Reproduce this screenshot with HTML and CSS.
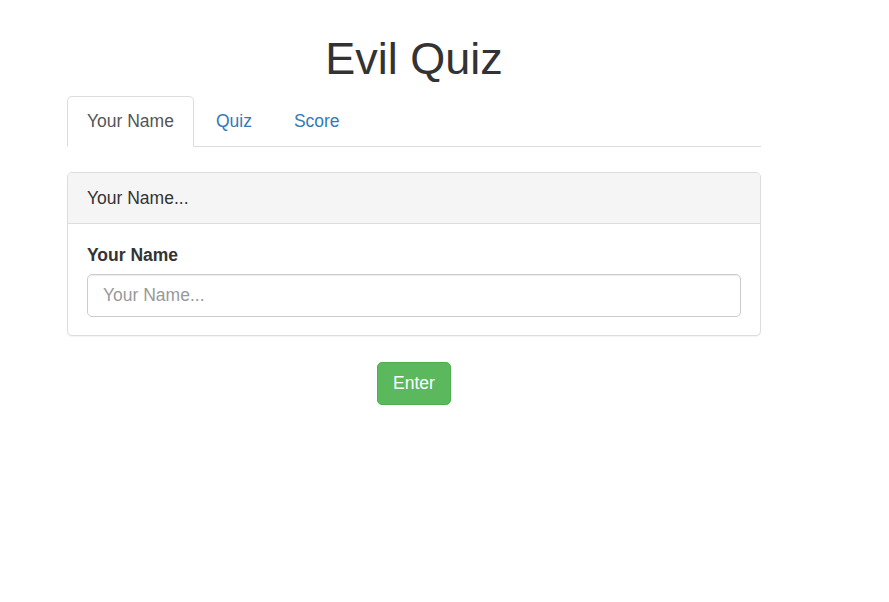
FILE: index.html
```html
<!DOCTYPE html>
<html>
<head>
<meta charset="utf-8">
<link rel="stylesheet" href="styles.css">
</head>
<body>
<div class="page">
  <h1 class="title">Evil Quiz</h1>
  <ul class="tabs">
    <li class="tab active"><a href="#">Your Name</a></li>
    <li class="tab"><a href="#">Quiz</a></li>
    <li class="tab"><a href="#">Score</a></li>
  </ul>
  <div class="panel">
    <div class="panel-heading">Your Name...</div>
    <div class="panel-body">
      <label class="label" for="name">Your Name</label>
      <input class="input" id="name" type="text" placeholder="Your Name...">
    </div>
  </div>
  <div class="actions">
    <button class="btn">Enter</button>
  </div>
</div>
</body>
</html>
```
FILE: styles.css
```css
* { box-sizing: border-box; }
html, body { margin: 0; padding: 0; background: #fff; }
body {
  font-family: "Liberation Sans", Arial, sans-serif;
  font-size: 17.5px;
  line-height: 25px;
  color: #333;
}
.page {
  width: 694px;
  margin-left: 67px;
  padding-top: 34px;
}
.title {
  margin: 0 0 12.5px;
  font-size: 45px;
  font-weight: 500;
  line-height: 49.5px;
  text-align: center;
  color: #333;
}
.tabs {
  display: flex;
  list-style: none;
  margin: 0 0 25px;
  padding: 0;
  border-bottom: 1px solid #ddd;
}
.tab {
  margin-bottom: -1px;
  margin-right: 2px;
}
.tab a {
  display: block;
  padding: 12px 19px;
  border: 1px solid transparent;
  border-radius: 5px 5px 0 0;
  color: #337ab7;
  text-decoration: none;
  line-height: 25px;
}
.tab.active a {
  color: #555;
  background: #fff;
  border-color: #ddd;
  border-bottom-color: transparent;
}
.panel {
  border: 1px solid #ddd;
  border-radius: 5px;
  background: #fff;
  margin-bottom: 26px;
  box-shadow: 0 1px 1px rgba(0,0,0,0.05);
}
.panel-heading {
  padding: 12.5px 19px;
  background: #f5f5f5;
  border-bottom: 1px solid #ddd;
  border-radius: 4px 4px 0 0;
  color: #333;
}
.panel-body {
  padding: 18.5px 19px 18.5px;
}
.label {
  display: block;
  font-weight: 700;
  margin-bottom: 6px;
}
.input {
  display: block;
  width: 100%;
  height: 43px;
  padding: 7.5px 15px;
  font-family: inherit;
  font-size: 17.5px;
  color: #555;
  border: 1px solid #ccc;
  border-radius: 5px;
  box-shadow: inset 0 1px 1px rgba(0,0,0,0.075);
  outline: none;
}
.input::placeholder { color: #999; }
.actions {
  display: flex;
  justify-content: center;
}
.btn {
  height: 42.5px;
  padding: 7.5px 15px;
  font-family: inherit;
  font-size: 17.5px;
  line-height: 25px;
  color: #fff;
  background: #5cb85c;
  border: 1px solid #4cae4c;
  border-radius: 5px;
}
```
